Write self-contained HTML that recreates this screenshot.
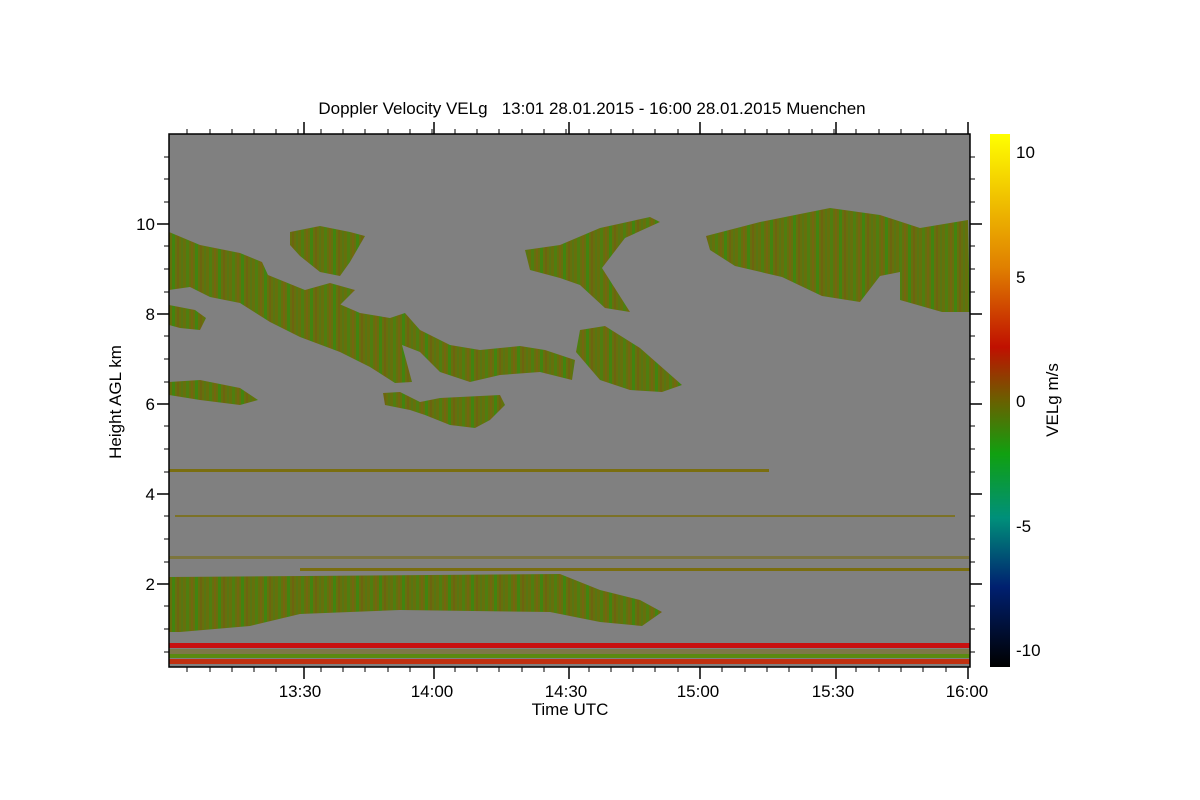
<!DOCTYPE html>
<html><head><meta charset="utf-8"><style>
html,body{margin:0;padding:0;background:#fff;}
svg{display:block;font-family:"Liberation Sans",sans-serif;}
</style></head><body>
<svg width="1200" height="800" viewBox="0 0 1200 800" xmlns="http://www.w3.org/2000/svg">
<defs>
<pattern id="tex" width="23" height="40" patternUnits="userSpaceOnUse">
<rect width="23" height="40" fill="#66700c"/>
<rect x="2" width="3" height="40" fill="#4f7e10"/>
<rect x="7" width="2" height="40" fill="#746610"/>
<rect x="11" width="3" height="40" fill="#428410"/>
<rect x="16" width="2" height="40" fill="#6e6410"/>
<rect x="20" width="2" height="40" fill="#587612"/>
</pattern>
<linearGradient id="cb" x1="0" y1="0" x2="0" y2="1">
<stop offset="0" stop-color="#ffff00"/>
<stop offset="0.25" stop-color="#e08000"/>
<stop offset="0.40" stop-color="#c01000"/>
<stop offset="0.5" stop-color="#6a6000"/>
<stop offset="0.6" stop-color="#10a010"/>
<stop offset="0.72" stop-color="#00907a"/>
<stop offset="0.85" stop-color="#002070"/>
<stop offset="1" stop-color="#000000"/>
</linearGradient>
</defs>
<text x="592" y="114" font-size="17" text-anchor="middle" fill="#000" xml:space="preserve">Doppler Velocity VELg   13:01 28.01.2015 - 16:00 28.01.2015 Muenchen</text>
<rect x="169" y="134" width="801" height="533" fill="#808080"/>
<g fill="url(#tex)">
<polygon points="169,232 200,245 240,253 262,262 268,275 300,288 330,300 360,313 390,318 405,313 420,330 450,345 480,350 520,346 545,350 575,360 572,380 540,372 500,375 470,382 440,372 420,352 402,345 412,382 395,383 370,367 340,352 300,337 270,322 240,303 210,297 190,287 169,290"/>
<polygon points="169,305 195,310 206,318 200,330 180,328 169,325"/>
<polygon points="169,382 200,380 240,388 258,400 240,405 200,400 169,395"/>
<polygon points="383,393 400,392 420,402 440,398 480,396 500,395 505,405 490,420 475,428 450,425 425,415 410,410 385,405"/>
<polygon points="290,232 320,226 350,232 365,236 350,262 340,276 320,272 300,256 290,245"/>
<polygon points="305,290 330,283 355,290 340,305 310,305"/>
<polygon points="525,250 560,245 600,228 650,217 660,222 625,238 602,268 630,312 605,308 580,285 560,278 530,270"/>
<polygon points="580,330 605,326 640,348 682,385 662,392 630,390 600,380 576,352"/>
<polygon points="706,236 760,222 830,208 880,215 920,228 968,220 970,312 942,312 900,300 900,272 880,276 860,302 822,296 782,277 735,266 710,250"/>
<polygon points="169,577 560,574 600,590 640,600 662,612 642,626 600,622 550,612 400,610 300,614 250,626 180,632 169,632"/>
</g>
<g fill="#7a6e10">
<rect x="169" y="469" width="600" height="3"/>
<rect x="175" y="515" width="780" height="2" opacity="0.8"/>
<rect x="169" y="556" width="800" height="3" opacity="0.6"/>
<rect x="300" y="568" width="670" height="3"/>
</g>
<rect x="169" y="643" width="801" height="5" fill="#c81010"/>
<rect x="169" y="654" width="801" height="4" fill="#5a8a10"/>
<rect x="169" y="659" width="801" height="5" fill="#c03010"/>
<rect x="169" y="649" width="801" height="5" fill="#7a7010" opacity="0.5"/>
<rect x="169" y="134" width="801" height="533" fill="none" stroke="#000" stroke-width="1.5"/>
<g stroke="#000" stroke-width="1.5">
<line x1="157" y1="224" x2="169" y2="224"/><line x1="157" y1="314" x2="169" y2="314"/><line x1="157" y1="404" x2="169" y2="404"/><line x1="157" y1="494" x2="169" y2="494"/><line x1="157" y1="584" x2="169" y2="584"/>
<line x1="970" y1="224" x2="982" y2="224"/><line x1="970" y1="314" x2="982" y2="314"/><line x1="970" y1="404" x2="982" y2="404"/><line x1="970" y1="494" x2="982" y2="494"/><line x1="970" y1="584" x2="982" y2="584"/>
<line x1="304" y1="667" x2="304" y2="679"/><line x1="434" y1="667" x2="434" y2="679"/><line x1="569" y1="667" x2="569" y2="679"/><line x1="700" y1="667" x2="700" y2="679"/><line x1="836" y1="667" x2="836" y2="679"/><line x1="968" y1="667" x2="968" y2="679"/>
<line x1="304" y1="122" x2="304" y2="134"/><line x1="434" y1="122" x2="434" y2="134"/><line x1="569" y1="122" x2="569" y2="134"/><line x1="700" y1="122" x2="700" y2="134"/><line x1="836" y1="122" x2="836" y2="134"/><line x1="968" y1="122" x2="968" y2="134"/>
</g>
<g stroke="#000" stroke-width="1">
<path d="M164 157H169M164 179H169M164 202H169M164 246H169M164 269H169M164 292H169M164 336H169M164 359H169M164 382H169M164 426H169M164 449H169M164 472H169M164 516H169M164 539H169M164 562H169M164 606H169M164 629H169M164 652H169"/>
<path d="M970 157H975M970 179H975M970 202H975M970 246H975M970 269H975M970 292H975M970 336H975M970 359H975M970 382H975M970 426H975M970 449H975M970 472H975M970 516H975M970 539H975M970 562H975M970 606H975M970 629H975M970 652H975"/>
<path d="M187 129V134M210 129V134M232 129V134M254 129V134M276 129V134M298 129V134M321 129V134M343 129V134M365 129V134M388 129V134M410 129V134M432 129V134M455 129V134M477 129V134M499 129V134M522 129V134M544 129V134M566 129V134M589 129V134M611 129V134M633 129V134M655 129V134M678 129V134M700 129V134M722 129V134M745 129V134M767 129V134M789 129V134M812 129V134M834 129V134M856 129V134M879 129V134M901 129V134M923 129V134M946 129V134"/>
<path d="M187 667V672M210 667V672M232 667V672M254 667V672M276 667V672M321 667V672M343 667V672M365 667V672M388 667V672M410 667V672M455 667V672M477 667V672M499 667V672M522 667V672M544 667V672M589 667V672M611 667V672M633 667V672M655 667V672M678 667V672M722 667V672M745 667V672M767 667V672M789 667V672M812 667V672M856 667V672M879 667V672M901 667V672M923 667V672M946 667V672"/>
</g>
<g font-size="17" fill="#000">
<text x="155" y="230" text-anchor="end">10</text>
<text x="155" y="320" text-anchor="end">8</text>
<text x="155" y="410" text-anchor="end">6</text>
<text x="155" y="500" text-anchor="end">4</text>
<text x="155" y="590" text-anchor="end">2</text>
<g text-anchor="middle">
<text x="300" y="697">13:30</text><text x="432" y="697">14:00</text><text x="566" y="697">14:30</text><text x="698" y="697">15:00</text><text x="833" y="697">15:30</text><text x="967" y="697">16:00</text>
<text x="570" y="715">Time UTC</text>
</g>
<text transform="translate(121,402) rotate(-90)" text-anchor="middle">Height AGL km</text>
</g>
<rect x="990" y="134" width="20" height="533" fill="url(#cb)"/>
<g font-size="17" fill="#000">
<text x="1016" y="158">10</text><text x="1016" y="283">5</text><text x="1016" y="407">0</text><text x="1016" y="532">-5</text><text x="1016" y="656">-10</text>
<text transform="translate(1058,400) rotate(-90)" text-anchor="middle">VELg m/s</text>
</g>
</svg>
</body></html>
